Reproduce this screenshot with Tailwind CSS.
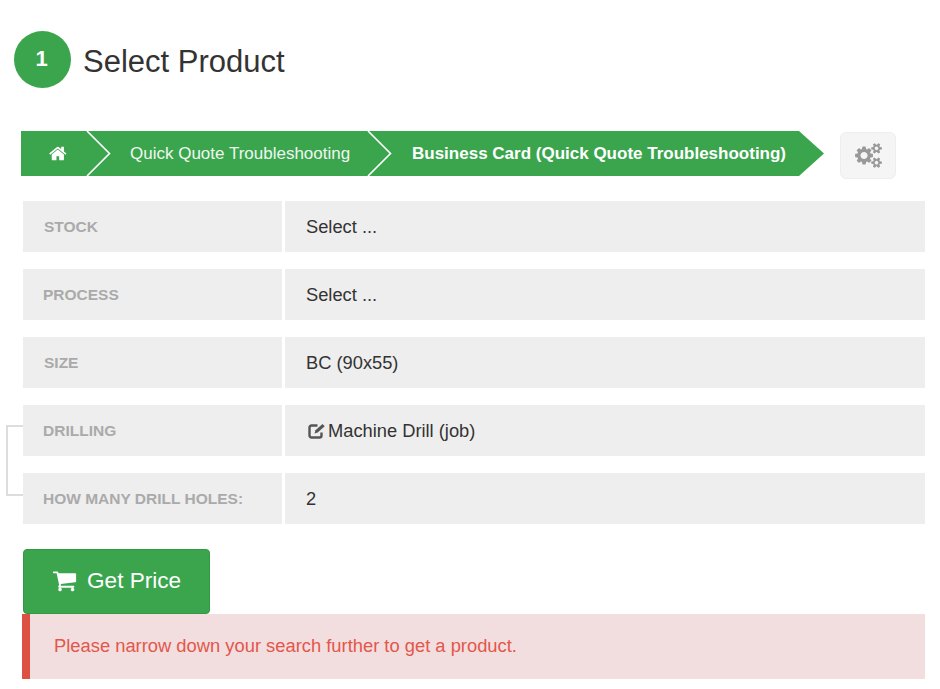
<!DOCTYPE html>
<html lang="en">
  <head>
    <meta charset="UTF-8" />
    <meta name="viewport" content="width=device-width, initial-scale=1.0" />
    <title>Select Product</title>
    <script src="https://cdn.jsdelivr.net/npm/@tailwindcss/browser@4"></script>
  </head>
  <body class="bg-white font-['Liberation_Sans',Arial,sans-serif] overflow-hidden">
    <div class="w-[940px] h-[689px] pt-[31px] overflow-hidden">
      <!-- Step heading -->
      <div class="flex items-center gap-[12px] pl-[14px] h-[57px]">
        <div class="w-[57px] h-[57px] pr-[2px] pb-[2px] rounded-full bg-[#3aa54d] text-white flex items-center justify-center text-[22px] font-bold">1</div>
        <h2 class="pt-[3px] text-[31px] text-[#333] leading-none">Select Product</h2>
      </div>

      <!-- Breadcrumb -->
      <div class="flex items-start mt-[43px] pl-[21px]">
        <div class="flex w-[803px] h-[45px] bg-[#3aa54d] text-white text-[17px] [clip-path:polygon(0_0,778px_0,803px_22.5px,778px_45px,0_45px)]">
          <div class="relative w-[89px] flex items-center pl-[28px]">
            <svg class="w-[19px] h-[19px] fill-white" viewBox="0 0 1792 1792"><path d="M1408 992v480q0 26-19 45t-45 19h-384v-384h-256v384h-384q-26 0-45-19t-19-45v-480q0-1 .5-3t.5-3l575-474 575 474q1 2 1 6zm223-69l-62 74q-8 9-21 11h-3q-13 0-21-7l-692-577-692 577q-12 8-24 7-13-2-21-11l-62-74q-8-10-7-23.5t11-21.5l719-599q32-26 76-26t76 26l244 204v-195q0-14 9-23t23-9h192q14 0 23 9t9 23v408l219 182q10 8 11 21.5t-7 23.5z"/></svg>
            <svg class="absolute left-[65px] top-0 w-[26px] h-[45px] fill-none stroke-white stroke-[1.6]" viewBox="0 0 26 45"><path d="M1 0 L23.5 22.5 L1 45"/></svg>
          </div>
          <div class="relative w-[282px] flex items-center pl-[20px] whitespace-nowrap">
            <span class="text-[#eef7ef]">Quick Quote Troubleshooting</span>
            <svg class="absolute left-[257px] top-0 w-[26px] h-[45px] fill-none stroke-white stroke-[1.6]" viewBox="0 0 26 45"><path d="M1 0 L23.5 22.5 L1 45"/></svg>
          </div>
          <div class="flex items-center pl-[20px] font-bold whitespace-nowrap">Business Card (Quick Quote Troubleshooting)</div>
        </div>
        <button class="ml-[16px] mt-px w-[56px] h-[47px] bg-[#f5f5f5] border border-[#eeeeee] rounded-[6px] flex items-center justify-center">
          <svg class="w-[27px] h-[25px] fill-[#999]" viewBox="0 0 1920 1792"><path d="M896 896q0-106-75-181t-181-75-181 75-75 181 75 181 181 75 181-75 75-181zm768 512q0-52-38-90t-90-38-90 38-38 90q0 53 37.5 90.5t90.5 37.5 90.5-37.5 37.5-90.5zm0-1024q0-52-38-90t-90-38-90 38-38 90q0 53 37.5 90.5t90.5 37.5 90.5-37.5 37.5-90.5zm-384 421v185q0 10-7 19.5t-16 10.5l-155 24q-11 35-32 76 34 48 90 115 7 11 7 20 0 12-7 19-23 30-82.5 89.5t-78.5 59.5q-11 0-21-7l-115-90q-37 19-77 31-11 108-23 155-7 24-30 24h-186q-11 0-20-7.5t-10-17.5l-23-153q-34-10-75-31l-118 89q-7 7-20 7-11 0-21-8-144-133-144-160 0-9 7-19 10-14 41-53t47-61q-23-44-35-82l-152-24q-10-1-17-9.5t-7-19.5v-185q0-10 7-19.5t16-10.5l155-24q11-35 32-76-34-48-90-115-7-11-7-20 0-12 7-20 22-30 82-89t79-59q11 0 21 7l115 90q34-18 77-32 11-108 23-154 7-24 30-24h186q11 0 20 7.5t10 17.5l23 153q34 10 75 31l118-89q8-7 20-7 11 0 21 8 144 133 144 160 0 8-7 19-12 16-42 54t-45 60q23 48 34 82l152 23q10 2 17 10.5t7 19.5zm640 533v140q0 16-149 31-12 27-30 52 51 113 51 138 0 4-4 7-122 71-124 71-8 0-46-47t-52-68q-20 2-30 2t-30-2q-14 21-52 68t-46 47q-2 0-124-71-4-3-4-7 0-25 51-138-18-25-30-52-149-15-149-31v-140q0-16 149-31 13-29 30-52-51-113-51-138 0-4 4-7 4-2 35-20t59-34 30-16q8 0 46 46.5t52 67.5q20-2 30-2t30 2q51-71 92-112l6-2q4 0 124 70 4 3 4 7 0 25-51 138 17 23 30 52 149 15 149 31zm0-1024v140q0 16-149 31-12 27-30 52 51 113 51 138 0 4-4 7-122 71-124 71-8 0-46-47t-52-68q-20 2-30 2t-30-2q-14 21-52 68t-46 47q-2 0-124-71-4-3-4-7 0-25 51-138-18-25-30-52-149-15-149-31v-140q0-16 149-31 13-29 30-52-51-113-51-138 0-4 4-7 4-2 35-20t59-34 30-16q8 0 46 46.5t52 67.5q20-2 30-2t30 2q51-71 92-112l6-2q4 0 124 70 4 3 4 7 0 25-51 138 17 23 30 52 149 15 149 31z"/></svg>
        </button>
      </div>

      <!-- Option rows -->
      <div class="relative flex flex-col gap-[17px] mt-[22px] ml-[23px] w-[902px]">
        <div class="flex h-[51px] gap-[3px]">
          <div class="w-[259px] bg-[#eeeeee] flex items-center pl-[21px] text-[15.5px] font-bold text-[#aaa]">STOCK</div>
          <div class="flex-1 bg-[#eeeeee] flex items-center pl-[21px] text-[18.3px] text-[#333]">Select ...</div>
        </div>
        <div class="flex h-[51px] gap-[3px]">
          <div class="w-[259px] bg-[#eeeeee] flex items-center pl-[20px] text-[15.5px] font-bold text-[#aaa]">PROCESS</div>
          <div class="flex-1 bg-[#eeeeee] flex items-center pl-[21px] text-[18.3px] text-[#333]">Select ...</div>
        </div>
        <div class="flex h-[51px] gap-[3px]">
          <div class="w-[259px] bg-[#eeeeee] flex items-center pl-[21px] text-[15.5px] font-bold text-[#aaa]">SIZE</div>
          <div class="flex-1 bg-[#eeeeee] flex items-center pl-[21px] text-[18.3px] text-[#333]">BC (90x55)</div>
        </div>
        <div class="flex h-[51px] gap-[3px]">
          <div class="w-[259px] bg-[#eeeeee] flex items-center pl-[20px] text-[15.5px] font-bold text-[#aaa]">DRILLING</div>
          <div class="flex-1 bg-[#eeeeee] flex items-center gap-[1px] pl-[22px] text-[18.3px] text-[#333]">
            <svg class="w-[20px] h-[20px] fill-none stroke-[#555]" viewBox="0 0 20 20"><path d="M14.5 11.5v3a2 2 0 0 1-2 2h-8a2 2 0 0 1-2-2v-8a2 2 0 0 1 2-2h6" stroke-width="2.4"/><path d="M7.5 12.5l1-3.2 7-6.3 2.2 2.2-7 6.3z" fill="#555" stroke="none"/></svg>
            <span>Machine Drill (job)</span>
          </div>
        </div>
        <div class="flex h-[51px] gap-[3px]">
          <div class="w-[259px] bg-[#eeeeee] flex items-center pl-[20px] text-[15.5px] font-bold text-[#aaa]">HOW MANY DRILL HOLES:</div>
          <div class="flex-1 bg-[#eeeeee] flex items-center pl-[21px] text-[18.3px] text-[#333]">2</div>
        </div>
        <!-- Connector between dependent rows -->
        <div class="absolute left-[-17px] top-[224px] w-[17px] h-[71px] border-2 border-r-0 border-[#dddddd]"></div>
      </div>

      <!-- Action -->
      <button class="flex items-center gap-[10px] mt-[25px] ml-[23px] w-[187px] h-[65px] pl-[28px] pb-[2px] bg-[#3aa54d] border border-[#2f9a43] rounded-[4px] text-white text-[22.6px]">
        <svg class="w-[25px] h-[25px] fill-white" viewBox="0 0 1792 1792"><path d="M704 1536q0 52-38 90t-90 38-90-38-38-90 38-90 90-38 90 38 38 90zm896 0q0 52-38 90t-90 38-90-38-38-90 38-90 90-38 90 38 38 90zm128-1088v512q0 24-16.5 42.5t-40.5 21.5l-1044 122q13 60 13 70 0 16-24 64h920q26 0 45 19t19 45-19 45-45 19h-1024q-26 0-45-19t-19-45q0-11 8-31.5t16-36 21.5-40 15.5-29.5l-177-823h-204q-26 0-45-19t-19-45 19-45 45-19h256q16 0 28.5 6.5t19.5 15.5 13 24.5 8 26 5.5 29.5 4.5 26h1201q26 0 45 19t19 45z"/></svg>
        <span>Get Price</span>
      </button>

      <!-- Alert -->
      <div class="flex items-center ml-[22px] w-[903px] h-[65px] pl-[24px] pb-[2px] bg-[#f2dede] border-l-[8px] border-[#dd5044] text-[18.35px] text-[#e2574c]">
        Please narrow down your search further to get a product.
      </div>
    </div>
  </body>
</html>
